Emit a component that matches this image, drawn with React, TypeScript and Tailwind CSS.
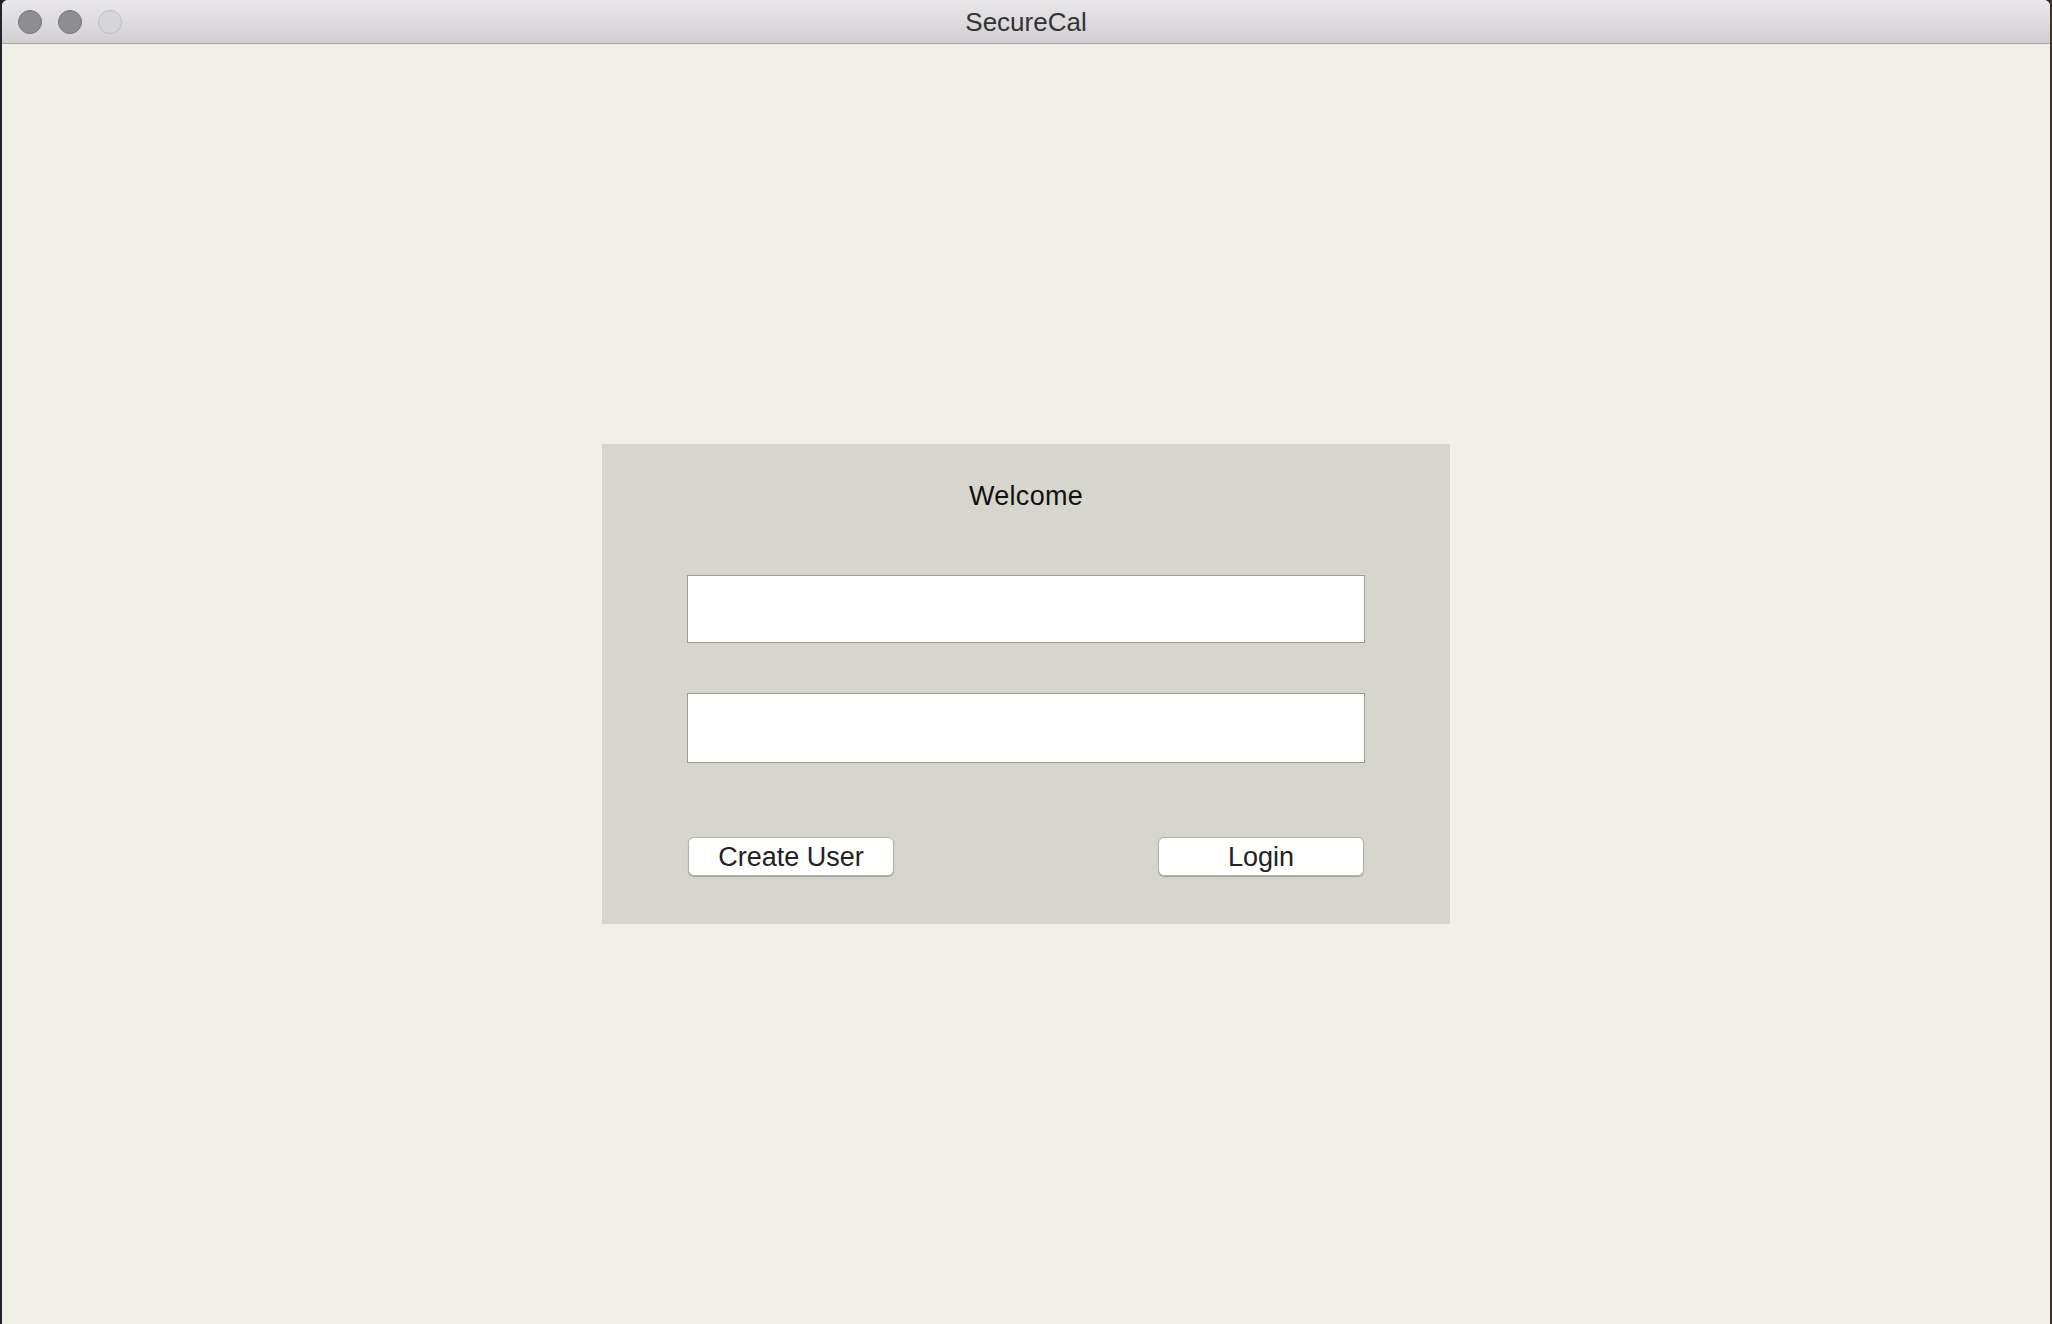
import React from "react";

const font = { fontFamily: '"Liberation Sans", Arial, sans-serif' };

function TrafficLight({ light }: { light?: boolean }) {
  return (
    <span
      className={`block h-[24px] w-[24px] rounded-full border ${
        light ? "bg-[#d6d5d7] border-[#bfbec0]" : "bg-[#8e8d8f] border-[#78777a]"
      }`}
    />
  );
}

export default function App() {
  return (
    <div className="flex h-[1324px] w-[2052px] bg-[#23232e]" style={font}>
      <div className="ml-[2px] flex w-[2048px] flex-col overflow-hidden rounded-t-[6px] bg-[#f0f0e8]">
        {/* title bar */}
        <div className="relative flex h-[44px] shrink-0 items-center justify-center border-b border-[#a8a6a9] bg-gradient-to-b from-[#e9e7ea] to-[#d1cfd2]">
          <div className="absolute left-[16px] top-[10px] flex gap-[16px]">
            <TrafficLight />
            <TrafficLight />
            <TrafficLight light />
          </div>
          <span className="text-[26px] leading-[30px] text-[#333333]">SecureCal</span>
        </div>

        {/* content */}
        <div className="flex flex-1 items-center justify-center">
          <div className="flex h-[480px] w-[848px] flex-col bg-[#d6d6ce] px-[85px] pt-[37px]">
            <div className="text-center text-[27px] leading-[30px] tracking-[0.3px] text-[#111111]">
              Welcome
            </div>
            <input
              type="text"
              className="mt-[64px] h-[68px] w-full border border-[#9d9d97] bg-white outline-none"
            />
            <input
              type="password"
              className="mt-[50px] h-[70px] w-full border border-[#9d9d97] bg-white outline-none"
            />
            <div className="mt-[74px] flex justify-between px-[1px]">
              <button className="h-[39px] w-[206px] rounded-[6px] border border-[#b2b2ac] bg-white text-[27px] leading-[30px] text-[#222222] shadow-[0_1px_1px_rgba(0,0,0,0.25)]">
                Create User
              </button>
              <button className="h-[39px] w-[206px] rounded-[6px] border border-[#b2b2ac] bg-white text-[27px] leading-[30px] text-[#222222] shadow-[0_1px_1px_rgba(0,0,0,0.25)]">
                Login
              </button>
            </div>
          </div>
        </div>
      </div>
      <div className="w-[2px] bg-[#3a3430]" />
    </div>
  );
}
